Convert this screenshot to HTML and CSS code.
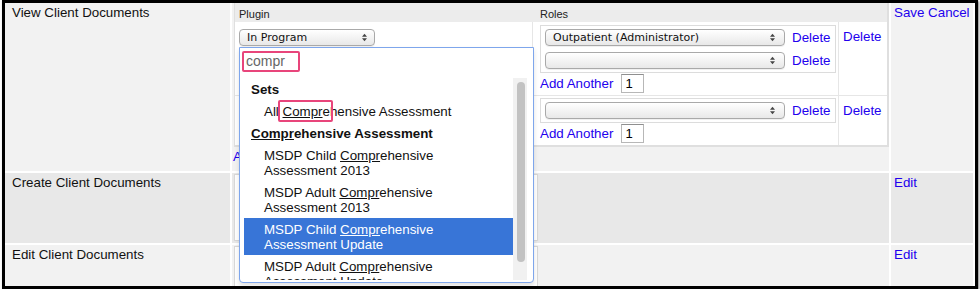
FILE: index.html
```html
<!DOCTYPE html>
<html lang="en">
<head>
    <meta charset="UTF-8">
    <title>Document Permissions</title>
    <link rel="stylesheet" href="styles.css">
</head>
<body>

    <div id="frame">
        <div class="perm-table">

            <!-- view -->
            <div class="cell name">View Client Documents</div>
            <div class="cell body">
                <div class="plugins">
                    <div class="ph">Plugin</div>
                    <div class="ph roles-h">Roles</div>
                    <div class="ph"></div>

                    <div class="pc plugin">
                        <div class="chosen">
                            <div class="select plugin-select">
                                <span>In Program</span>
                                <svg class="arrows" viewBox="0 0 6 10" width="5" height="9"><polygon points="0,4 3,0.5 6,4"/><polygon points="0,6 6,6 3,9.5"/></svg>
                            </div>
                            <div class="drop">
                                <div class="search">compr</div>
                                <div class="results">
                                    <ul>
                                        <li class="group">Sets</li>
                                        <li>All <span class="hl"><em>Compr</em>e</span>hensive Assessment</li>
                                        <li class="group"><em>Compr</em>ehensive Assessment</li>
                                        <li>MSDP Child <em>Compr</em>ehensive Assessment 2013</li>
                                        <li>MSDP Adult <em>Compr</em>ehensive Assessment 2013</li>
                                        <li class="active">MSDP Child <em>Compr</em>ehensive Assessment Update</li>
                                        <li>MSDP Adult <em>Compr</em>ehensive Assessment Update</li>
                                    </ul>
                                    <div class="scroll"><div class="thumb"></div></div>
                                </div>
                            </div>
                        </div>
                    </div>
                    <div class="pc roles">
                        <div class="role-box">
                            <div class="role-row">
                                <div class="select role-select">
                                    <span>Outpatient (Administrator)</span>
                                    <svg class="arrows" viewBox="0 0 6 10" width="5" height="9"><polygon points="0,4 3,0.5 6,4"/><polygon points="0,6 6,6 3,9.5"/></svg>
                                </div>
                                <a href="#">Delete</a>
                            </div>
                            <div class="role-row">
                                <div class="select role-select">
                                    <span></span>
                                    <svg class="arrows" viewBox="0 0 6 10" width="5" height="9"><polygon points="0,4 3,0.5 6,4"/><polygon points="0,6 6,6 3,9.5"/></svg>
                                </div>
                                <a href="#">Delete</a>
                            </div>
                        </div>
                        <div class="add-row"><a href="#">Add Another</a><input type="text" value="1"></div>
                    </div>
                    <div class="pc del"><a href="#">Delete</a></div>

                    <div class="pc plugin last-row">
                        <div class="select plugin-select">
                            <span></span>
                            <svg class="arrows" viewBox="0 0 6 10" width="5" height="9"><polygon points="0,4 3,0.5 6,4"/><polygon points="0,6 6,6 3,9.5"/></svg>
                        </div>
                    </div>
                    <div class="pc roles last-row">
                        <div class="role-box">
                            <div class="role-row">
                                <div class="select role-select">
                                    <span></span>
                                    <svg class="arrows" viewBox="0 0 6 10" width="5" height="9"><polygon points="0,4 3,0.5 6,4"/><polygon points="0,6 6,6 3,9.5"/></svg>
                                </div>
                                <a href="#">Delete</a>
                            </div>
                        </div>
                        <div class="add-row"><a href="#">Add Another</a><input type="text" value="1"></div>
                    </div>
                    <div class="pc del last-row"><a href="#">Delete</a></div>
                </div>
                <a href="#" class="add-plugin">Add Another</a>
            </div>
            <div class="cell actions"><a href="#">Save</a> <a href="#">Cancel</a></div>

            <!-- create -->
            <div class="cell name dark">Create Client Documents</div>
            <div class="cell body dark"><div class="plugin-box"></div></div>
            <div class="cell actions dark"><a href="#">Edit</a></div>

            <!-- edit -->
            <div class="cell name">Edit Client Documents</div>
            <div class="cell body"><div class="plugin-box open"></div></div>
            <div class="cell actions"><a href="#">Edit</a></div>

        </div>
    </div>

</body>
</html>
```

FILE: styles.css
```css
* {
    box-sizing: border-box;
}

body {
    margin: 0;
    background: #fff;
    font-family: "Liberation Sans", Arial, sans-serif;
    font-size: 10pt;
    color: #111;
}

a {
    color: #2200ee;
    text-decoration: none;
}

#frame {
    margin-left: 2px;
    width: 976px;
    height: 289px;
    border: 3px solid #000;
    box-shadow: 1px 1px 2px rgba(0, 0, 0, 0.5);
    overflow: hidden;
}

.perm-table {
    display: grid;
    grid-template-columns: 225px 657px 82px;
    grid-template-rows: 168px 70px 41px;
    gap: 2px;
    background: #fff;
}

.cell {
    background: #f2f2f2;
    line-height: 16px;
}

.cell.dark {
    background: #e8e8e8;
}

.name {
    padding: 2px 7px;
}

.actions {
    padding: 2px 3px;
}

.body {
    padding-left: 1px;
}

/* nested plugin / roles table */
.plugins {
    display: grid;
    grid-template-columns: 298px 306px 48px;
    grid-template-rows: 19px 74px 49px;
    margin-left: 1px;
    width: 655px;
    border: 2px solid #dfdfdf;
    border-top: 0;
    border-left-width: 1px;
}

.ph {
    background: #ececec;
    font-size: 11px;
    line-height: 15px;
    padding: 4px 0 0 4px;
    color: #222;
}

.ph.roles-h {
    padding-left: 7px;
}

.pc {
    background: #fff;
    border-right: 1px solid #e6e6e6;
    border-bottom: 1px solid #e6e6e6;
}

.pc.del {
    border-right: 0;
    padding: 7px 0 0 4px;
}

.pc.last-row {
    border-bottom: 0;
}

.pc.plugin {
    padding: 7px 4px 0;
}

.pc.roles {
    padding: 3px 2px 0 7px;
}

.pc.roles.last-row {
    padding-top: 2px;
}

.chosen {
    position: relative;
}

.select {
    display: flex;
    align-items: center;
    justify-content: space-between;
    height: 17px;
    padding: 0 8px 0 7px;
    border: 1px solid #a9a9a9;
    border-radius: 4px;
    background: linear-gradient(#ffffff, #e8e8e8);
    box-shadow: 0 1px 0 rgba(0, 0, 0, 0.06);
    font-family: "DejaVu Sans", sans-serif;
    font-size: 11px;
    color: #111;
}

.plugin-select {
    width: 136px;
    padding-right: 7px;
}

.role-select {
    width: 240px;
    padding-right: 9px;
}

.arrows {
    fill: #444;
    flex: none;
}

.role-box {
    width: 296px;
    padding: 3px 4px;
    border: 1px solid #dcdcdc;
    display: flex;
    flex-direction: column;
    gap: 6px;
}

.role-row {
    display: flex;
    align-items: center;
    gap: 7px;
    line-height: 17px;
}

.add-row {
    display: flex;
    align-items: center;
    gap: 8px;
    margin-top: 1px;
}

.add-row input {
    width: 23px;
    height: 19px;
    padding: 0 3px;
    border: 1px solid #b7b7b7;
    border-top-color: #8f8f8f;
    font-family: "Liberation Sans", Arial, sans-serif;
    font-size: 13px;
    color: #000;
}

.add-plugin {
    display: block;
    margin-top: 2px;
    line-height: 16px;
}

.plugin-box {
    margin: 1px 0 0 1px;
    width: 304px;
    height: 67px;
    background: #fff;
    border: 1px solid #d8d8d8;
}

.plugin-box.open {
    height: 40px;
    border-bottom: 0;
}

/* chosen dropdown */
.drop {
    position: absolute;
    top: calc(100% + 1px);
    left: 0;
    z-index: 10;
    width: 295px;
    height: 236px;
    background: #fff;
    border: 1px solid #7ea6ec;
    border-radius: 0 0 4px 4px;
    box-shadow: 0 3px 5px rgba(0, 0, 0, 0.12);
}

.search {
    margin: 3px 0 0 2px;
    width: 58px;
    height: 21px;
    padding-left: 2px;
    border: 2px solid #e8457b;
    border-radius: 2px;
    font-size: 14px;
    line-height: 17px;
    color: #666;
}

.results {
    display: flex;
    margin-top: 6px;
    height: 202px;
    padding-left: 4px;
}

.results ul {
    width: 269px;
    margin: 0;
    padding: 0;
    list-style: none;
    overflow: hidden;
}

.results li {
    padding: 4px 30px 3px 20px;
    line-height: 15px;
}

.results li.group {
    padding-left: 7px;
    font-weight: bold;
}

.results li.active {
    background: #3875d7;
    color: #fff;
}

.results em {
    font-style: normal;
    text-decoration: underline;
}

.hl {
    position: relative;
}

.hl::after {
    content: '';
    position: absolute;
    left: -5px;
    right: -3px;
    top: -4px;
    bottom: -3px;
    border: 2px solid #e8457b;
    border-radius: 2px;
}

.scroll {
    width: 14px;
    background: #f1f1f1;
}

.thumb {
    margin: 4px 0 0 4px;
    width: 8px;
    height: 180px;
    background: #c2c2c2;
    border-radius: 4px;
}
```
